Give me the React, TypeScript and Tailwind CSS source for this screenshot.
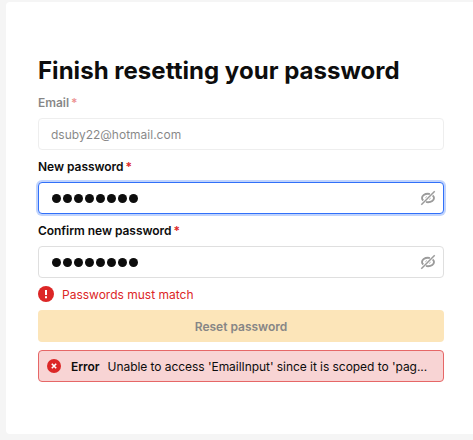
import type { ReactNode } from "react";

function EyeOffIcon() {
  return (
    <svg width="16" height="16" viewBox="0 0 16 16" fill="none" className="shrink-0 text-[#9b9b9b]">
      <path d="M9.9 4.1C9.3 3.9 8.7 3.8 8 3.8 4.6 3.8 2 5.8 2 8c0 .9.5 1.8 1.3 2.5" stroke="currentColor" strokeWidth="1.9" />
      <path d="M12.6 5.4C13.5 6.1 14 7 14 8c0 2.2-2.6 4.2-6 4.2-.7 0-1.4-.1-2-.3" stroke="currentColor" strokeWidth="1.9" />
      <path d="M5.6 8.2c0-.9.5-1.6 1.3-1.9" stroke="currentColor" strokeWidth="0.6" />
      <path d="M10.4 7.8c0 .9-.5 1.6-1.3 1.9" stroke="currentColor" strokeWidth="0.6" />
      <path d="M1.3 14.7 14.7 1.3" stroke="currentColor" strokeWidth="1.5" />
    </svg>
  );
}

function Label({ children }: { children: ReactNode }) {
  return (
    <label className="flex h-8 items-center pt-[2px] text-[12px] font-semibold tracking-[-0.04px]">
      {children}
      <span className="ml-[2px] text-[#dc2626]">*</span>
    </label>
  );
}

function PasswordBox({ focused = false }: { focused?: boolean }) {
  return (
    <div
      className={
        focused
          ? "flex h-8 items-center justify-between rounded-[4px] border border-[#3170f9] bg-white pr-[7px] pl-[13px] ring-2 ring-[#c1d4fd]"
          : "flex h-8 items-center justify-between rounded-[4px] border border-[#dfdfdf] bg-white pr-[7px] pl-[13px]"
      }
    >
      <div className="flex gap-[1.7px] pt-px">
        {Array.from({ length: 8 }, (_, i) => (
          <span key={i} className="size-[9.3px] rounded-full bg-[#0d0d0d]" />
        ))}
      </div>
      <EyeOffIcon />
    </div>
  );
}

export default function App() {
  return (
    <div className="h-[440px] w-[473px] overflow-hidden bg-[#f5f5f5] pt-[2px] pl-[6px] font-['Inter',sans-serif] text-[#0d0d0d]">
      <div className="h-[432px] rounded-l-[4px] bg-white pt-[53px] pr-[29px] pl-8">
        <h1 className="h-[31px] text-[24px] leading-8 font-bold tracking-[0.03px] whitespace-nowrap">
          Finish resetting your password
        </h1>

        <div className="opacity-50">
          <Label>Email</Label>
          <div className="flex h-8 items-center rounded-[4px] border border-[#dfdfdf] px-3 pt-[2px] text-[12px]">
            dsuby22@hotmail.com
          </div>
        </div>

        <Label>New password</Label>
        <PasswordBox focused />

        <Label>Confirm new password</Label>
        <PasswordBox />

        <div className="flex h-8 items-center gap-2 text-[12px] text-[#dc2626]">
          <svg width="16" height="16" viewBox="0 0 16 16">
            <circle cx="8" cy="8" r="8" fill="#dc2626" />
            <path d="M8 4v5" stroke="white" strokeWidth="2" />
            <path d="M8 10.3v2" stroke="white" strokeWidth="2" />
          </svg>
          <span className="pt-[2px]">Passwords must match</span>
        </div>

        <button className="block h-8 w-full rounded-[4px] bg-[#fce5b9] pt-[2px] text-[12px] font-semibold text-[#868686]">
          Reset password
        </button>

        <div className="mt-2 flex h-8 items-center rounded-[4px] border border-[#e66767] bg-[#f8d4d4] px-2 text-[12px]">
          <svg width="14" height="14" viewBox="0 0 14 14" className="shrink-0">
            <circle cx="7" cy="7" r="7" fill="#dc2626" />
            <path d="m4.8 4.8 4.4 4.4m0-4.4L4.8 9.2" stroke="white" strokeWidth="1.6" />
          </svg>
          <span className="ml-[10px] pt-[2px] font-semibold tracking-[-0.04px]">Error</span>
          <span className="ml-2 pt-[2px] tracking-[-0.05px] whitespace-nowrap">
            Unable to access 'EmailInput' since it is scoped to 'pag...
          </span>
        </div>
      </div>
    </div>
  );
}
